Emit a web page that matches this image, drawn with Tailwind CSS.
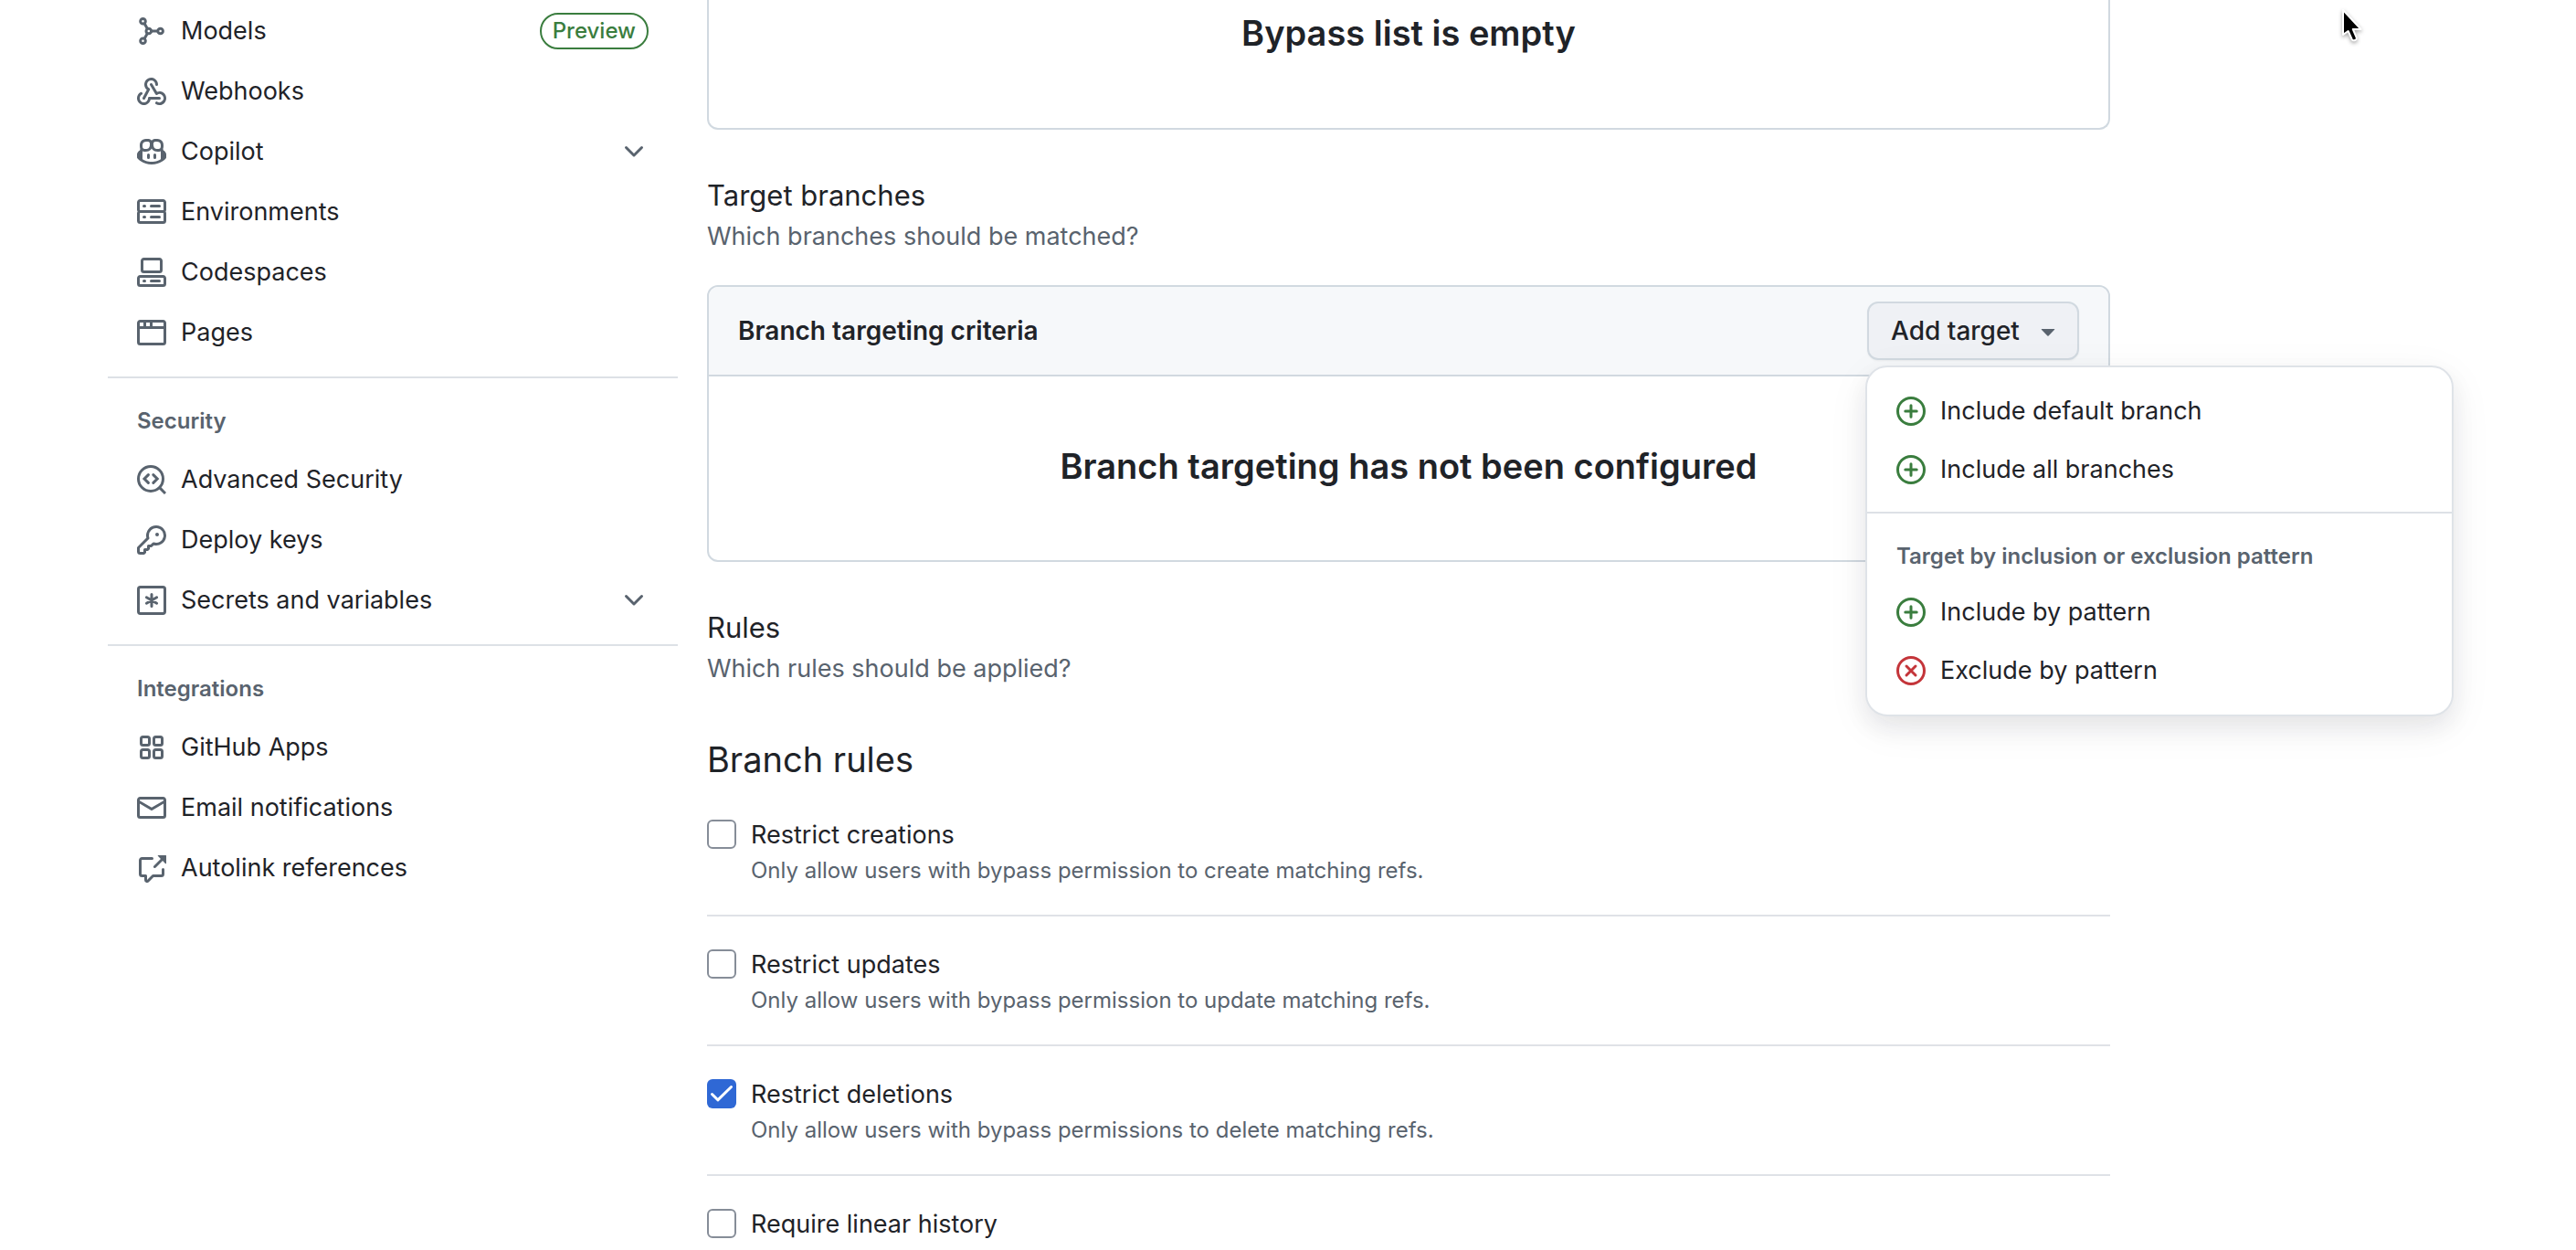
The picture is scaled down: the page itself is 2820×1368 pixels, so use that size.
<!DOCTYPE html>
<html lang="en">
<head>
<meta charset="utf-8">
<meta name="viewport" content="width=device-width, initial-scale=1">
<title>Rulesets</title>
<script src="https://cdn.jsdelivr.net/npm/@tailwindcss/browser@4"></script>
</head>
<body class="relative bg-white font-['Inter',sans-serif] text-[27px] text-[#1f2328]">

<svg class="hidden" aria-hidden="true">
  <symbol id="i-models" viewBox="0 0 16 16"><g fill="none" stroke="currentColor" stroke-width="1.5"><circle cx="3.25" cy="2.6" r="1.4"/><circle cx="3.25" cy="13.4" r="1.4"/><circle cx="6.4" cy="8" r="1.4"/><circle cx="12.8" cy="8" r="1.4"/><path d="M4 3.8 5.7 6.8M4 12.2 5.7 9.2M7.8 8h3.6"/></g></symbol>
  <symbol id="i-webhook" viewBox="0 0 16 16"><path d="M5.5 4.25a2.25 2.25 0 0 1 4.5 0 .75.75 0 0 0 1.5 0 3.75 3.75 0 1 0-6.14 2.889l-2.272 4.258a.75.75 0 0 0 1.324.706L7 7.25a.75.75 0 0 0-.309-1.015A2.25 2.25 0 0 1 5.5 4.25Z"/><path d="M7.364 3.607a.75.75 0 0 1 1.03.257l2.608 4.349a3.75 3.75 0 1 1-.628 6.785.75.75 0 0 1 .752-1.299 2.25 2.25 0 1 0-.033-3.88.75.75 0 0 1-1.03-.256L7.107 4.636a.75.75 0 0 1 .257-1.03Z"/><path d="M2.9 8.776A.75.75 0 0 1 2.625 9.8 2.25 2.25 0 1 0 6 11.75a.75.75 0 0 1 .75-.751h5.5a.75.75 0 0 1 0 1.5H7.425a3.751 3.751 0 1 1-5.55-3.998.75.75 0 0 1 1.024.274Z"/></symbol>
  <symbol id="i-copilot" viewBox="0 0 16 16"><path d="M7.998 15.035c-4.562 0-7.873-2.914-7.998-3.749V9.338c.085-.628.677-1.686 1.588-2.065.013-.07.024-.143.036-.218.029-.183.06-.384.126-.612-.201-.508-.254-1.084-.254-1.656 0-.87.128-1.769.693-2.484.579-.733 1.494-1.124 2.724-1.261 1.206-.134 2.262.034 2.944.765.05.053.096.108.139.165.044-.057.094-.112.143-.165.682-.731 1.738-.899 2.944-.765 1.23.137 2.145.528 2.724 1.261.566.715.693 1.614.693 2.484 0 .572-.053 1.148-.254 1.656.066.228.098.429.126.612.012.076.024.148.037.218.924.385 1.522 1.471 1.591 2.095v1.872c0 .766-3.351 3.795-8.002 3.795Zm0-1.485c2.28 0 4.584-1.11 5.002-1.433V7.862l-.023-.116c-.49.21-1.075.291-1.727.291-1.146 0-2.059-.327-2.71-.991A3.222 3.222 0 0 1 8 6.303a3.24 3.24 0 0 1-.544.743c-.65.664-1.563.991-2.71.991-.652 0-1.236-.081-1.727-.291l-.023.116v4.255c.419.323 2.722 1.433 5.002 1.433ZM6.762 2.83c-.193-.206-.637-.413-1.682-.297-1.019.113-1.479.404-1.713.7-.247.312-.369.789-.369 1.554 0 .793.129 1.171.308 1.371.162.181.519.379 1.442.379.853 0 1.339-.235 1.638-.54.315-.322.527-.827.617-1.553.117-.935-.037-1.395-.241-1.614Zm4.155-.297c-1.044-.116-1.488.091-1.681.297-.204.219-.359.679-.242 1.614.091.726.303 1.231.618 1.553.299.305.784.54 1.638.54.922 0 1.28-.198 1.442-.379.179-.2.308-.578.308-1.371 0-.765-.123-1.242-.37-1.554-.233-.296-.693-.587-1.713-.7Z"/><path d="M6.25 9.037a.75.75 0 0 1 .75.75v1.501a.75.75 0 0 1-1.5 0V9.787a.75.75 0 0 1 .75-.75Zm4.25.75v1.501a.75.75 0 0 1-1.5 0V9.787a.75.75 0 0 1 1.5 0Z"/></symbol>
  <symbol id="i-server" viewBox="0 0 16 16"><path d="M1.75 1h12.5c.966 0 1.75.784 1.75 1.75v4c0 .372-.116.717-.314 1 .198.283.314.628.314 1v4a1.75 1.75 0 0 1-1.75 1.75H1.75A1.75 1.75 0 0 1 0 12.75v-4c0-.358.109-.707.314-1a1.739 1.739 0 0 1-.314-1v-4C0 1.784.784 1 1.75 1ZM1.5 2.75v4c0 .138.112.25.25.25h12.5a.25.25 0 0 0 .25-.25v-4a.25.25 0 0 0-.25-.25H1.75a.25.25 0 0 0-.25.25Zm.25 5.75a.25.25 0 0 0-.25.25v4c0 .138.112.25.25.25h12.5a.25.25 0 0 0 .25-.25v-4a.25.25 0 0 0-.25-.25ZM7 4.75A.75.75 0 0 1 7.75 4h4.5a.75.75 0 0 1 0 1.5h-4.5A.75.75 0 0 1 7 4.75ZM7.75 10h4.5a.75.75 0 0 1 0 1.5h-4.5a.75.75 0 0 1 0-1.5ZM3 4.75A.75.75 0 0 1 3.75 4h.5a.75.75 0 0 1 0 1.5h-.5A.75.75 0 0 1 3 4.75ZM3.75 10h.5a.75.75 0 0 1 0 1.5h-.5a.75.75 0 0 1 0-1.5Z"/></symbol>
  <symbol id="i-codespaces" viewBox="0 0 16 16"><path d="M0 11.25c0-.966.784-1.75 1.75-1.75h12.5c.966 0 1.75.784 1.75 1.75v3A1.75 1.75 0 0 1 14.25 16H1.75A1.75 1.75 0 0 1 0 14.25Zm2-9.5C2 .784 2.784 0 3.75 0h8.5C13.216 0 14 .784 14 1.75v5a1.75 1.75 0 0 1-1.75 1.75h-8.5A1.75 1.75 0 0 1 2 6.75Zm1.75-.25a.25.25 0 0 0-.25.25v5c0 .138.112.25.25.25h8.5a.25.25 0 0 0 .25-.25v-5a.25.25 0 0 0-.25-.25Zm-2 9.5a.25.25 0 0 0-.25.25v3c0 .138.112.25.25.25h12.5a.25.25 0 0 0 .25-.25v-3a.25.25 0 0 0-.25-.25Z"/><path d="M7 12.75a.75.75 0 0 1 .75-.75h4.5a.75.75 0 0 1 0 1.5h-4.5a.75.75 0 0 1-.75-.75Zm-4 0a.75.75 0 0 1 .75-.75h.5a.75.75 0 0 1 0 1.5h-.5a.75.75 0 0 1-.75-.75Z"/></symbol>
  <symbol id="i-browser" viewBox="0 0 16 16"><path d="M0 2.75C0 1.784.784 1 1.750 1h12.5c.966 0 1.75.784 1.75 1.75v10.5A1.75 1.75 0 0 1 14.25 15H1.75A1.75 1.75 0 0 1 0 13.25ZM14.5 6h-13v7.25c0 .138.112.25.25.25h12.5a.25.25 0 0 0 .25-.25Zm-6-3.500v2h6V2.75a.25.25 0 0 0-.25-.25ZM5 2.500v2h2v-2Zm-3.250 0a.25.25 0 0 0-.25.25V4.500h2v-2Z"/></symbol>
  <symbol id="i-codescan" viewBox="0 0 16 16"><g fill="none" stroke="currentColor" stroke-width="1.5"><circle cx="7.5" cy="7.5" r="6.75"/><path d="m12.2 12.2 3.3 3.3"/><path d="M6.2 5.3 4 7.5l2.2 2.2M8.9 5.3l2.2 2.2-2.2 2.2" stroke-linecap="round"/></g></symbol>
  <symbol id="i-key" viewBox="0 0 16 16"><path d="M10.5 0a5.499 5.499 0 1 1-1.288 10.848l-.932.932a.749.749 0 0 1-.53.22H7v.75a.749.749 0 0 1-.22.53l-.5.5a.749.749 0 0 1-.53.22H5v.75a.749.749 0 0 1-.22.53l-.5.5a.749.749 0 0 1-.53.22h-2A1.75 1.75 0 0 1 0 14.25v-2c0-.199.079-.389.22-.53l4.932-4.932A5.5 5.5 0 0 1 10.5 0Zm-4 5.5c-.001.431.069.86.205 1.269a.75.75 0 0 1-.181.768L1.5 12.56v1.69c0 .138.112.25.25.25h1.69l.06-.06v-1.19a.75.75 0 0 1 .75-.75h1.19l.06-.06v-1.19a.75.75 0 0 1 .75-.75h1.19l1.023-1.025a.75.75 0 0 1 .768-.18A4 4 0 1 0 6.5 5.5ZM11 6a1 1 0 1 1 0-2 1 1 0 0 1 0 2Z"/></symbol>
  <symbol id="i-secret" viewBox="0 0 16 16"><g fill="none" stroke="currentColor" stroke-width="1.5"><rect x=".75" y=".75" width="14.5" height="14.5" rx="1.1"/><path d="M8 4.8v6.4M5.2 6.4l5.6 3.2M10.8 6.4 5.2 9.6" stroke-linecap="round"/></g></symbol>
  <symbol id="i-apps" viewBox="0 0 16 16"><g fill="none" stroke="currentColor" stroke-width="1.5"><rect x="2.25" y="2.25" width="4.5" height="4.5" rx="1"/><rect x="9.25" y="2.25" width="4.5" height="4.5" rx="1"/><rect x="2.25" y="9.25" width="4.5" height="4.5" rx="1"/><rect x="9.25" y="9.25" width="4.5" height="4.5" rx="1"/></g></symbol>
  <symbol id="i-mail" viewBox="0 0 16 16"><path d="M1.75 2h12.5c.966 0 1.75.784 1.75 1.75v8.5A1.75 1.75 0 0 1 14.25 14H1.75A1.75 1.75 0 0 1 0 12.25v-8.5C0 2.784.784 2 1.75 2ZM1.5 12.251c0 .138.112.25.25.25h12.5a.25.25 0 0 0 .25-.25V5.809L8.38 9.397a.75.75 0 0 1-.76 0L1.5 5.809v6.442Zm13-8.181v-.32a.25.25 0 0 0-.25-.25H1.75a.25.25 0 0 0-.25.25v.32L8 7.88Z"/></symbol>
  <symbol id="i-crossref" viewBox="0 0 16 16"><path d="M2.75 3.5a.25.25 0 0 0-.25.25v7.5c0 .138.112.25.25.25h2a.75.75 0 0 1 .75.75v2.19l2.72-2.72a.749.749 0 0 1 .53-.22h4.5a.25.25 0 0 0 .25-.25v-2.5a.75.75 0 0 1 1.5 0v2.5A1.75 1.75 0 0 1 13.25 13H9.06l-2.573 2.573A1.458 1.458 0 0 1 4 14.543V13H2.75A1.75 1.75 0 0 1 1 11.25v-7.5C1 2.784 1.784 2 2.75 2h5.5a.75.75 0 0 1 0 1.5ZM16 1.25v4.146a.25.25 0 0 1-.427.177L14.03 4.03l-3.75 3.75a.749.749 0 0 1-1.275-.326.749.749 0 0 1 .215-.734l3.75-3.75-1.543-1.543A.25.25 0 0 1 11.604 1h4.146a.25.25 0 0 1 .25.25Z"/></symbol>
  <symbol id="i-chevron" viewBox="0 0 16 16"><path d="M12.78 5.22a.749.749 0 0 1 0 1.06l-4.25 4.25a.749.749 0 0 1-1.06 0L3.22 6.28a.749.749 0 1 1 1.06-1.06L8 8.939l3.72-3.719a.749.749 0 0 1 1.06 0Z"/></symbol>
  <symbol id="i-triangle" viewBox="0 0 16 16"><path d="m4.427 7.427 3.396 3.396a.25.25 0 0 0 .354 0l3.396-3.396A.25.25 0 0 0 11.396 7H4.604a.25.25 0 0 0-.177.427Z"/></symbol>
  <symbol id="i-plus" viewBox="0 0 16 16"><g fill="none" stroke="currentColor" stroke-width="1.5" stroke-linecap="round"><circle cx="8" cy="8" r="7.25"/><path d="M8 4.900v6.200M4.900 8h6.200"/></g></symbol>
  <symbol id="i-x" viewBox="0 0 16 16"><g fill="none" stroke="currentColor" stroke-width="1.5" stroke-linecap="round"><circle cx="8" cy="8" r="7.25"/><path d="m5.5 5.5 5 5M10.5 5.5l-5 5"/></g></symbol>
</svg>

<div class="grid grid-cols-[624px_minmax(0,1fr)] gap-x-8 pl-[118px] pr-[510px]">

  <nav class="pt-px" aria-label="Settings">
    <ul>
      <li><a href="#" class="flex h-[66px] items-center gap-4 px-8"><svg class="size-8 fill-current text-[#59636e]"><use href="#i-models"/></svg><span class="flex-1">Models</span><span class="flex h-10 items-center rounded-full border-2 border-[#3a7d3e] px-3 text-[24px] font-medium text-[#3a7d3e]">Preview</span></a></li>
      <li><a href="#" class="flex h-[66px] items-center gap-4 px-8"><svg class="size-8 fill-current text-[#59636e]"><use href="#i-webhook"/></svg>Webhooks</a></li>
      <li><button type="button" class="flex h-[66px] w-full items-center gap-4 px-8 text-left"><svg class="size-8 fill-current text-[#59636e]"><use href="#i-copilot"/></svg><span class="flex-1">Copilot</span><svg class="size-8 fill-current text-[#59636e]"><use href="#i-chevron"/></svg></button></li>
      <li><a href="#" class="flex h-[66px] items-center gap-4 px-8"><svg class="size-8 fill-current text-[#59636e]"><use href="#i-server"/></svg>Environments</a></li>
      <li><a href="#" class="flex h-[66px] items-center gap-4 px-8"><svg class="size-8 fill-current text-[#59636e]"><use href="#i-codespaces"/></svg>Codespaces</a></li>
      <li><a href="#" class="flex h-[66px] items-center gap-4 px-8"><svg class="size-8 fill-current text-[#59636e]"><use href="#i-browser"/></svg>Pages</a></li>
    </ul>
    <section class="mt-[15px] border-t-2 border-[#dde1e6]">
      <h3 class="px-8 pt-[31px] pb-[15px] text-[24px] leading-8 font-semibold text-[#59636e]">Security</h3>
      <ul>
        <li><a href="#" class="flex h-[66px] items-center gap-4 px-8"><svg class="size-8 fill-current text-[#59636e]"><use href="#i-codescan"/></svg>Advanced Security</a></li>
        <li><a href="#" class="flex h-[66px] items-center gap-4 px-8"><svg class="size-8 fill-current text-[#59636e]"><use href="#i-key"/></svg>Deploy keys</a></li>
        <li><button type="button" class="flex h-[66px] w-full items-center gap-4 px-8 text-left"><svg class="size-8 fill-current text-[#59636e]"><use href="#i-secret"/></svg><span class="flex-1">Secrets and variables</span><svg class="size-8 fill-current text-[#59636e]"><use href="#i-chevron"/></svg></button></li>
      </ul>
    </section>
    <section class="mt-[15px] border-t-2 border-[#dde1e6]">
      <h3 class="px-8 pt-[31px] pb-[15px] text-[24px] leading-8 font-semibold text-[#59636e]">Integrations</h3>
      <ul>
        <li><a href="#" class="flex h-[66px] items-center gap-4 px-8"><svg class="size-8 fill-current text-[#59636e]"><use href="#i-apps"/></svg>GitHub Apps</a></li>
        <li><a href="#" class="flex h-[66px] items-center gap-4 px-8"><svg class="size-8 fill-current text-[#59636e]"><use href="#i-mail"/></svg>Email notifications</a></li>
        <li><a href="#" class="flex h-[66px] items-center gap-4 px-8"><svg class="size-8 fill-current text-[#59636e]"><use href="#i-crossref"/></svg>Autolink references</a></li>
      </ul>
    </section>
  </nav>

  <main>
    <div class="rounded-b-xl border-x-2 border-b-2 border-[#d1d9e0] pt-[6px] pb-[74px]">
      <h3 class="text-center text-[38px] leading-[60px] font-semibold">Bypass list is empty</h3>
    </div>

    <h2 class="mt-[52px] text-[31px] leading-10">Target branches</h2>
    <p class="leading-[50px] text-[#59636e]">Which branches should be matched?</p>

    <section class="mt-7 rounded-xl border-2 border-[#d1d9e0]">
      <div class="flex h-[98px] items-center justify-between rounded-t-[10px] border-b-2 border-[#d1d9e0] bg-[#f6f8fa] px-8">
        <h3 class="text-[28px] font-semibold">Branch targeting criteria</h3>
        <div class="relative">
          <button type="button" aria-expanded="true" class="flex h-16 w-[232px] items-center justify-between rounded-xl border-2 border-[#d1d9e0] bg-[#eff1f5] pr-4 pl-6 text-[28px] font-medium shadow-xs">Add target<svg class="size-8 fill-current text-[#59636e]"><use href="#i-triangle"/></svg></button>
          <div class="absolute top-full -left-0.5 z-10 mt-[6px] w-[644px] rounded-3xl border-2 border-[#dfe3e8] bg-white py-4 shadow-[0_12px_24px_0_rgba(37,41,46,0.08),0_12px_48px_0_rgba(37,41,46,0.06)]">
            <button type="button" class="flex h-16 w-full items-center gap-4 px-8 text-left"><svg class="size-8 text-[#3a7d3e]"><use href="#i-plus"/></svg>Include default branch</button>
            <button type="button" class="flex h-16 w-full items-center gap-4 px-8 text-left"><svg class="size-8 text-[#3a7d3e]"><use href="#i-plus"/></svg>Include all branches</button>
            <div class="mt-[14px] border-t-2 border-[#dde1e6] px-8 pt-[31px] pb-[13px] text-[24px] leading-8 font-semibold text-[#59636e]">Target by inclusion or exclusion pattern</div>
            <button type="button" class="flex h-16 w-full items-center gap-4 px-8 text-left"><svg class="size-8 text-[#3a7d3e]"><use href="#i-plus"/></svg>Include by pattern</button>
            <button type="button" class="flex h-16 w-full items-center gap-4 px-8 text-left"><svg class="size-8 text-[#c4353a]"><use href="#i-x"/></svg>Exclude by pattern</button>
          </div>
        </div>
      </div>
      <h3 class="pt-[68px] pb-[73px] text-center text-[38px] leading-[60px] font-semibold">Branch targeting has not been configured</h3>
    </section>

    <h2 class="mt-[52px] text-[31px] leading-10">Rules</h2>
    <p class="leading-[50px] text-[#59636e]">Which rules should be applied?</p>
    <h2 class="mt-11 text-[38px] leading-[60px]">Branch rules</h2>

    <ul class="divide-y-2 divide-[#dfe2e7]">
      <li class="flex gap-4 pt-9 pb-[26px]">
        <input id="r1" type="checkbox" class="size-8 appearance-none rounded-md border-2 border-[#868d98] bg-white">
        <div><label for="r1" class="block leading-[34px]">Restrict creations</label><p class="text-[24px] leading-[44px] text-[#59636e]">Only allow users with bypass permission to create matching refs.</p></div>
      </li>
      <li class="flex gap-4 pt-9 pb-[26px]">
        <input id="r2" type="checkbox" class="size-8 appearance-none rounded-md border-2 border-[#868d98] bg-white">
        <div><label for="r2" class="block leading-[34px]">Restrict updates</label><p class="text-[24px] leading-[44px] text-[#59636e]">Only allow users with bypass permission to update matching refs.</p></div>
      </li>
      <li class="flex gap-4 pt-9 pb-[26px]">
        <span class="grid size-8">
          <input id="r3" type="checkbox" checked class="col-start-1 row-start-1 size-8 appearance-none rounded-md bg-[#2f68d5]">
          <svg class="pointer-events-none col-start-1 row-start-1 size-8" viewBox="0 0 32 32" fill="none" stroke="#fff" stroke-width="3" stroke-linecap="round" stroke-linejoin="round"><path d="m5.5 16.500 6.3 6.3L26.5 8.500"/></svg>
        </span>
        <div><label for="r3" class="block leading-[34px]">Restrict deletions</label><p class="text-[24px] leading-[44px] text-[#59636e]">Only allow users with bypass permissions to delete matching refs.</p></div>
      </li>
      <li class="flex gap-4 pt-9">
        <input id="r4" type="checkbox" class="size-8 appearance-none rounded-md border-2 border-[#868d98] bg-white">
        <label for="r4" class="leading-[34px]">Require linear history</label>
      </li>
    </ul>
  </main>
</div>

<!-- Mouse pointer -->
<svg class="absolute top-[9px] left-[2561px] h-10 w-7 drop-shadow-[0_2px_2px_rgba(0,0,0,0.35)]" viewBox="0 0 28 40" aria-hidden="true"><path d="M4 2v27l5.600-4 4.200 9.200c1.300 2.300 5.800.5 4.900-2L14.800 23H23.500Z" fill="#000" stroke="#fff" stroke-width="2" stroke-linejoin="round"/></svg>
</body>
</html>
